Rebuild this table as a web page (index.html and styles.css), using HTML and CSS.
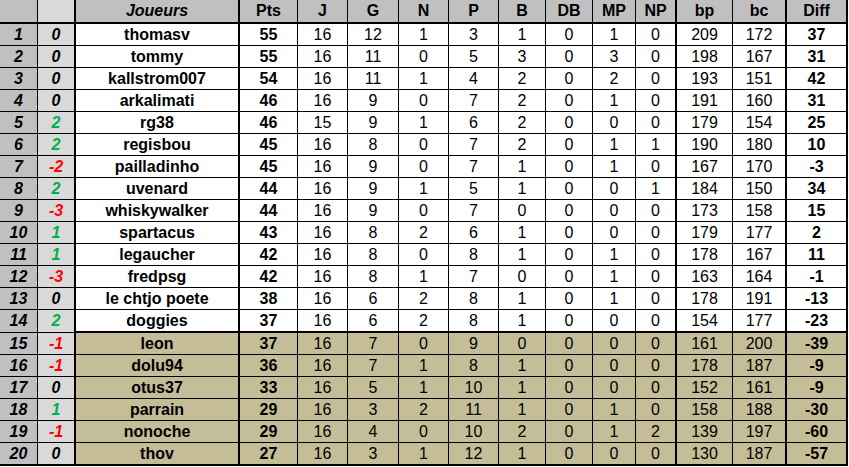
FILE: index.html
```html
<!DOCTYPE html>
<html lang="fr">
<head>
<meta charset="utf-8">
<title>Classement</title>
<link rel="stylesheet" href="styles.css">
</head>
<body>
<div class="board">
  <div class="row hdr"><div></div><div></div><div class="ji">Joueurs</div><div>Pts</div><div>J</div><div>G</div><div>N</div><div>P</div><div>B</div><div>DB</div><div>MP</div><div>NP</div><div>bp</div><div>bc</div><div>Diff</div></div>
  <div class="row"><div>1</div><div>0</div><div>thomasv</div><div>55</div><div>16</div><div>12</div><div>1</div><div>3</div><div>1</div><div>0</div><div>1</div><div>0</div><div>209</div><div>172</div><div>37</div></div>
  <div class="row"><div>2</div><div>0</div><div>tommy</div><div>55</div><div>16</div><div>11</div><div>0</div><div>5</div><div>3</div><div>0</div><div>3</div><div>0</div><div>198</div><div>167</div><div>31</div></div>
  <div class="row"><div>3</div><div>0</div><div>kallstrom007</div><div>54</div><div>16</div><div>11</div><div>1</div><div>4</div><div>2</div><div>0</div><div>2</div><div>0</div><div>193</div><div>151</div><div>42</div></div>
  <div class="row"><div>4</div><div>0</div><div>arkalimati</div><div>46</div><div>16</div><div>9</div><div>0</div><div>7</div><div>2</div><div>0</div><div>1</div><div>0</div><div>191</div><div>160</div><div>31</div></div>
  <div class="row"><div>5</div><div class="up">2</div><div>rg38</div><div>46</div><div>15</div><div>9</div><div>1</div><div>6</div><div>2</div><div>0</div><div>0</div><div>0</div><div>179</div><div>154</div><div>25</div></div>
  <div class="row"><div>6</div><div class="up">2</div><div>regisbou</div><div>45</div><div>16</div><div>8</div><div>0</div><div>7</div><div>2</div><div>0</div><div>1</div><div>1</div><div>190</div><div>180</div><div>10</div></div>
  <div class="row"><div>7</div><div class="dn">-2</div><div>pailladinho</div><div>45</div><div>16</div><div>9</div><div>0</div><div>7</div><div>1</div><div>0</div><div>1</div><div>0</div><div>167</div><div>170</div><div>-3</div></div>
  <div class="row"><div>8</div><div class="up">2</div><div>uvenard</div><div>44</div><div>16</div><div>9</div><div>1</div><div>5</div><div>1</div><div>0</div><div>0</div><div>1</div><div>184</div><div>150</div><div>34</div></div>
  <div class="row"><div>9</div><div class="dn">-3</div><div>whiskywalker</div><div>44</div><div>16</div><div>9</div><div>0</div><div>7</div><div>0</div><div>0</div><div>0</div><div>0</div><div>173</div><div>158</div><div>15</div></div>
  <div class="row"><div>10</div><div class="up">1</div><div>spartacus</div><div>43</div><div>16</div><div>8</div><div>2</div><div>6</div><div>1</div><div>0</div><div>0</div><div>0</div><div>179</div><div>177</div><div>2</div></div>
  <div class="row"><div>11</div><div class="up">1</div><div>legaucher</div><div>42</div><div>16</div><div>8</div><div>0</div><div>8</div><div>1</div><div>0</div><div>1</div><div>0</div><div>178</div><div>167</div><div>11</div></div>
  <div class="row"><div>12</div><div class="dn">-3</div><div>fredpsg</div><div>42</div><div>16</div><div>8</div><div>1</div><div>7</div><div>0</div><div>0</div><div>1</div><div>0</div><div>163</div><div>164</div><div>-1</div></div>
  <div class="row"><div>13</div><div>0</div><div>le chtjo poete</div><div>38</div><div>16</div><div>6</div><div>2</div><div>8</div><div>1</div><div>0</div><div>1</div><div>0</div><div>178</div><div>191</div><div>-13</div></div>
  <div class="row sep"><div>14</div><div class="up">2</div><div>doggies</div><div>37</div><div>16</div><div>6</div><div>2</div><div>8</div><div>1</div><div>0</div><div>0</div><div>0</div><div>154</div><div>177</div><div>-23</div></div>
  <div class="row tan"><div>15</div><div class="dn">-1</div><div>leon</div><div>37</div><div>16</div><div>7</div><div>0</div><div>9</div><div>0</div><div>0</div><div>0</div><div>0</div><div>161</div><div>200</div><div>-39</div></div>
  <div class="row tan"><div>16</div><div class="dn">-1</div><div>dolu94</div><div>36</div><div>16</div><div>7</div><div>1</div><div>8</div><div>1</div><div>0</div><div>0</div><div>0</div><div>178</div><div>187</div><div>-9</div></div>
  <div class="row tan"><div>17</div><div>0</div><div>otus37</div><div>33</div><div>16</div><div>5</div><div>1</div><div>10</div><div>1</div><div>0</div><div>0</div><div>0</div><div>152</div><div>161</div><div>-9</div></div>
  <div class="row tan"><div>18</div><div class="up">1</div><div>parrain</div><div>29</div><div>16</div><div>3</div><div>2</div><div>11</div><div>1</div><div>0</div><div>1</div><div>0</div><div>158</div><div>188</div><div>-30</div></div>
  <div class="row tan"><div>19</div><div class="dn">-1</div><div>nonoche</div><div>29</div><div>16</div><div>4</div><div>0</div><div>10</div><div>2</div><div>0</div><div>1</div><div>2</div><div>139</div><div>197</div><div>-60</div></div>
  <div class="row tan last"><div>20</div><div>0</div><div>thov</div><div>27</div><div>16</div><div>3</div><div>1</div><div>12</div><div>1</div><div>0</div><div>0</div><div>0</div><div>130</div><div>187</div><div>-57</div></div>
</div>
</body>
</html>
```
FILE: styles.css
```css
html, body {
  margin: 0;
  padding: 0;
  background: #ffffff;
}

.board {
  width: 849px;
  font-family: "Liberation Sans", Arial, sans-serif;
  font-size: 16px;
  color: #000000;
}

.row {
  display: grid;
  grid-template-columns: 38px 38px 164px 58px 50px 51px 50px 50px 47px 47px 43px 41px 56px 54px 61px;
  height: 22px;
}

.row > div {
  box-sizing: border-box;
  display: flex;
  align-items: center;
  justify-content: center;
  border-right: 1px solid #000;
  border-bottom: 1px solid #000;
  white-space: nowrap;
  background: #ffffff;
}

.row > div:nth-child(1) {
  background: #c0c0c0;
  font-weight: bold;
  font-style: italic;
}

.row > div:nth-child(2) {
  background: #d9d9d9;
  font-weight: bold;
  font-style: italic;
  border-right-width: 2px;
}

.row > div:nth-child(3) {
  font-weight: bold;
  border-right-width: 2px;
}

.row > div:nth-child(4) {
  font-weight: bold;
}

.row > div:nth-child(12),
.row > div:nth-child(14),
.row > div:nth-child(15) {
  border-right-width: 2px;
}

.row > div:nth-child(15) {
  font-weight: bold;
}

.row > div.up { color: #00b050; }
.row > div.dn { color: #ff0000; }

.hdr {
  height: 24px;
}

.hdr > div {
  background: #c0c0c0;
  font-weight: bold;
  border-bottom-width: 2px;
}

.hdr > div:nth-child(2) {
  background: #d9d9d9;
}

.hdr > div.ji {
  font-style: italic;
}

.sep, .last {
  height: 23px;
}

.sep > div:nth-child(n+3),
.last > div {
  border-bottom-width: 2px;
}

.tan > div:nth-child(n+3) {
  background: #c4bd97;
}
```
